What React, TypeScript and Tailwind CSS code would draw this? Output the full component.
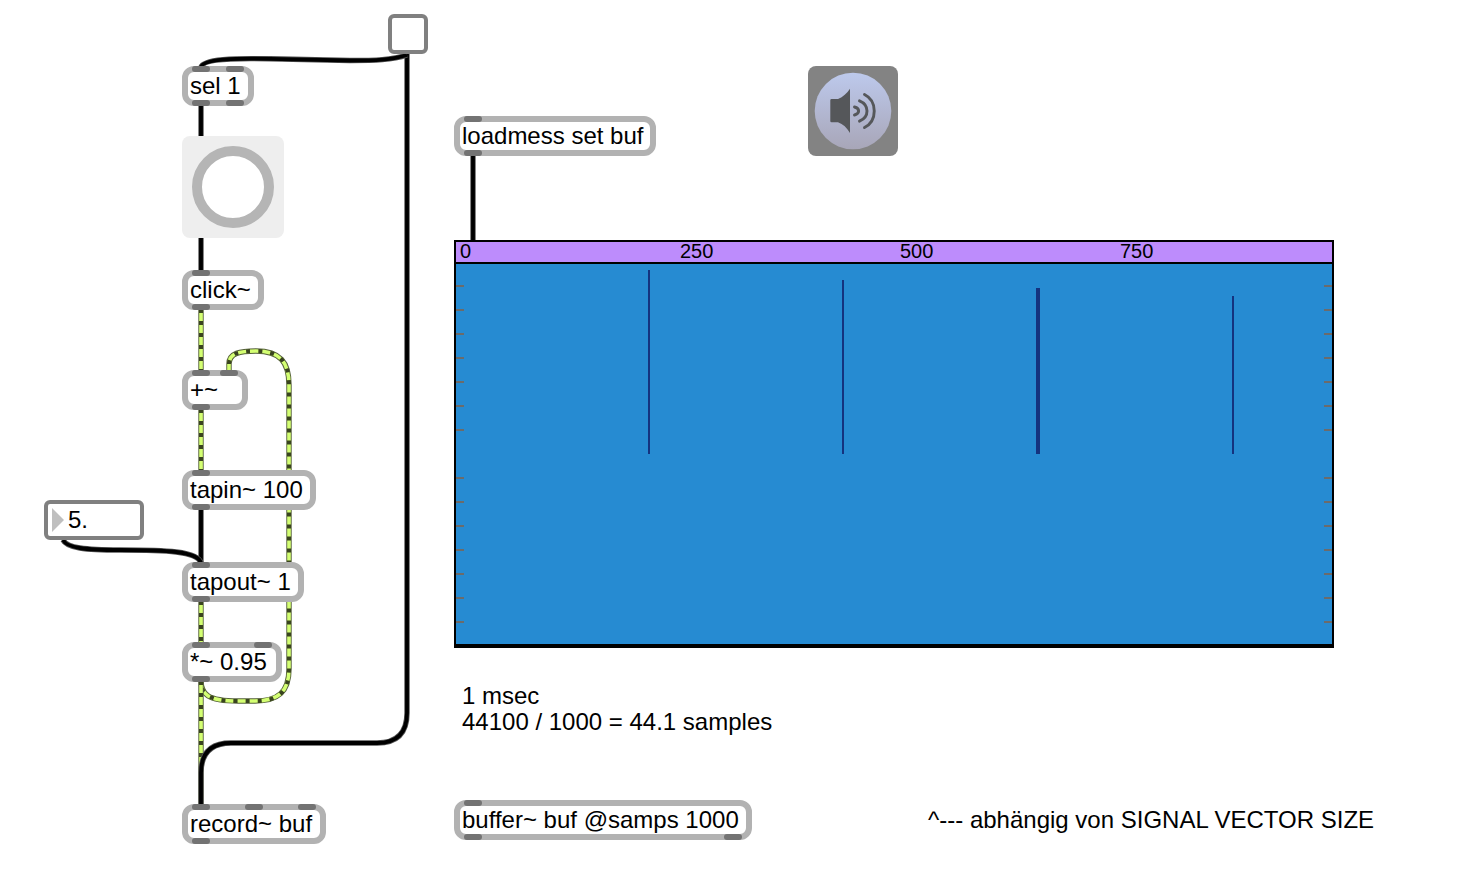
import React from "react";

type PatchObject = {
  id: string;
  text: string;
  place: string;
  inlets: string[];
  outlets: string[];
};

const objects: PatchObject[] = [
  { id: "sel", text: "sel 1", place: "left-[182px] top-[66px] w-[72px]", inlets: ["left-1", "left-[38px]"], outlets: ["left-1", "left-[38px]"] },
  { id: "click", text: "click~", place: "left-[182px] top-[270px] w-[82px]", inlets: ["left-1"], outlets: ["left-1"] },
  { id: "plus", text: "+~", place: "left-[182px] top-[370px] w-[66px]", inlets: ["left-1", "left-8"], outlets: ["left-1"] },
  { id: "tapin", text: "tapin~ 100", place: "left-[182px] top-[470px] w-[134px]", inlets: ["left-1"], outlets: ["left-1"] },
  { id: "tapout", text: "tapout~ 1", place: "left-[182px] top-[562px] w-[122px]", inlets: ["left-1"], outlets: ["left-1"] },
  { id: "times", text: "*~ 0.95", place: "left-[182px] top-[642px] w-[100px]", inlets: ["left-1", "left-[66px]"], outlets: ["left-1"] },
  { id: "record", text: "record~ buf", place: "left-[182px] top-[804px] w-[144px]", inlets: ["left-1", "left-[57px]", "left-[110px]"], outlets: ["left-1"] },
  { id: "loadmess", text: "loadmess set buf", place: "left-[454px] top-[116px] w-[202px]", inlets: ["left-1"], outlets: ["left-1"] },
  { id: "buffer", text: "buffer~ buf @samps 1000", place: "left-[454px] top-[800px] w-[298px]", inlets: ["left-1"], outlets: ["left-1", "left-[264px]"] },
];

const controlCords = [
  "M407 54 V713 C407 733 397 743 377 743 H231 C211 743 201 753 201 773 V806",
  "M407 55 C392 60 375 60.5 350 60.5 L270 58.8 C235 58 203 59 201 67",
  "M201 104 V138",
  "M201 236 V272",
  "M201 508 V564",
  "M63 540 C67 548 85 550 120 550 C165 550 198 551 201 563",
  "M473 154 V242",
];

const signalCords = [
  { d: "M201 308 V372", phase: -1 },
  { d: "M201 408 V472", phase: -1 },
  { d: "M201 600 V644", phase: -1 },
  {
    d: "M201 680 C201 694 207 701 238 701 H255 C278 701 289 692 289 669 V385 C289 362 280 351 256 351 C240 351 229 353 229 364 V372",
    phase: -8.5,
  },
  { d: "M201 680 V806", phase: -1 },
];

function ObjectBox({ text, place, inlets, outlets }: PatchObject) {
  return (
    <div className={`absolute h-10 rounded-xl border-6 border-[#b2b2b2] bg-white pl-[2px] text-2xl leading-7 whitespace-nowrap ${place}`}>
      {inlets.map((x) => (
        <span key={x} className={`absolute -top-1.5 h-1.5 w-[18px] rounded-full bg-[#737373] ${x}`} />
      ))}
      {text}
      {outlets.map((x) => (
        <span key={x} className={`absolute -bottom-1.5 h-1.5 w-[18px] rounded-full bg-[#737373] ${x}`} />
      ))}
    </div>
  );
}

function Cords() {
  return (
    <svg className="pointer-events-none absolute inset-0 h-[890px] w-full" fill="none" aria-hidden="true">
      {signalCords.map(({ d, phase }) => (
        <g key={d}>
          <path d={d} stroke="#56623a" strokeWidth="5.4" />
          <path d={d} stroke="#d4ff73" strokeWidth="3.6" />
          <path d={d} stroke="#39431f" strokeWidth="4" strokeDasharray="4 8" strokeDashoffset={phase} />
        </g>
      ))}
      {controlCords.map((d) => (
        <g key={d}>
          <path d={d} stroke="#555555" strokeWidth="5.4" />
          <path d={d} stroke="#000" strokeWidth="3.8" />
        </g>
      ))}
    </svg>
  );
}

const ticks = Array.from({ length: 15 }, (_, i) => i);

function TickColumn() {
  return (
    <div className="flex flex-col gap-[22px] pt-[21px]">
      {ticks.map((i) => (
        <span key={i} className={i === 7 ? "h-[2px] w-2" : "h-[2px] w-2 bg-[#6b6b6b]"} />
      ))}
    </div>
  );
}

function Waveform() {
  return (
    <section aria-label="Waveform" className="absolute top-[240px] left-[454px] w-[880px] border-2 border-b-4 border-black bg-[#268bd2]">
      <div className="grid h-[22px] grid-cols-[220px_220px_220px_1fr] border-b-2 border-black bg-[#bd8cfc] pl-1 text-xl leading-[18px]">
        <span>0</span>
        <span>250</span>
        <span>500</span>
        <span>750</span>
      </div>
      <div className="relative flex h-[380px] justify-between">
        <TickColumn />
        <TickColumn />
        <svg className="absolute inset-0 h-full w-full" fill="#14337f" aria-hidden="true">
          <rect x="192" y="6" width="2" height="184" />
          <rect x="386" y="16" width="2" height="174" />
          <rect x="580" y="24" width="4" height="166" />
          <rect x="776" y="32" width="2" height="158" />
        </svg>
      </div>
    </section>
  );
}

function SpeakerButton() {
  return (
    <button type="button" aria-label="Audio on/off" className="absolute top-[66px] left-[808px] h-[90px] w-[90px] rounded-lg bg-[#838383]">
      <svg viewBox="0 0 90 90" className="h-full w-full" fill="none">
        <defs>
          <linearGradient id="disc" x1="0" y1="0" x2="0" y2="1">
            <stop offset="0" stopColor="#bdc9ec" />
            <stop offset="1" stopColor="#a8a6b8" />
          </linearGradient>
        </defs>
        <circle cx="45" cy="45" r="38.3" fill="url(#disc)" />
        <path d="M23.5 33 H30 C35 31 39 27 42 22.7 V67 C39 62 35 58 30 56.3 H23.5 Q22.3 56.3 22.3 55.1 V34.2 Q22.3 33 23.5 33Z" fill="#55575a" />
        <g stroke="#55575a" strokeWidth="2.9" strokeLinecap="round">
          <path d="M46.5 41 C52 42.5 52 47.5 46.5 49" />
          <path d="M51.5 34.8 C61.5 39 61.5 51 51.5 55.2" />
          <path d="M56.5 28.5 C69.5 35 69.5 55 56.5 61.5" />
        </g>
      </svg>
    </button>
  );
}

export default function App() {
  return (
    <main className="relative min-h-[890px] w-full overflow-hidden bg-white font-['Liberation_Sans',Arial,sans-serif] text-black">
      <Cords />

      <input
        type="checkbox"
        aria-label="Record toggle"
        className="absolute top-[14px] left-[388px] h-10 w-10 appearance-none rounded-md border-4 border-[#808080] bg-white checked:bg-[#808080]"
      />

      <button type="button" aria-label="Bang" className="absolute top-[136px] left-[182px] flex h-[102px] w-[102px] items-center justify-center rounded-lg bg-[#eeeeee]">
        <span className="h-[82px] w-[82px] rounded-full border-10 border-[#b5b5b5] bg-white" />
      </button>

      <label className="absolute top-[500px] left-[44px] flex h-10 w-[100px] items-center gap-1 rounded-md border-4 border-[#808080] bg-white pl-1">
        <svg viewBox="0 0 12 24" className="h-6 w-3 shrink-0" fill="#bfbfbf" aria-hidden="true">
          <path d="M0 0 L12 12 L0 24Z" />
        </svg>
        <input type="text" aria-label="Delay time" defaultValue="5." className="h-7 w-full min-w-0 bg-transparent text-2xl leading-7 outline-none" />
      </label>

      {objects.map((o) => (
        <ObjectBox key={o.id} {...o} />
      ))}

      <SpeakerButton />
      <Waveform />

      <p className="absolute top-[683px] left-[462px] text-2xl leading-[26px] whitespace-nowrap">
        1 msec
        <br />
        44100 / 1000 = 44.1 samples
      </p>
      <p className="absolute top-[806px] left-[928px] text-2xl leading-7 whitespace-nowrap">^--- abhängig von SIGNAL VECTOR SIZE</p>
    </main>
  );
}
